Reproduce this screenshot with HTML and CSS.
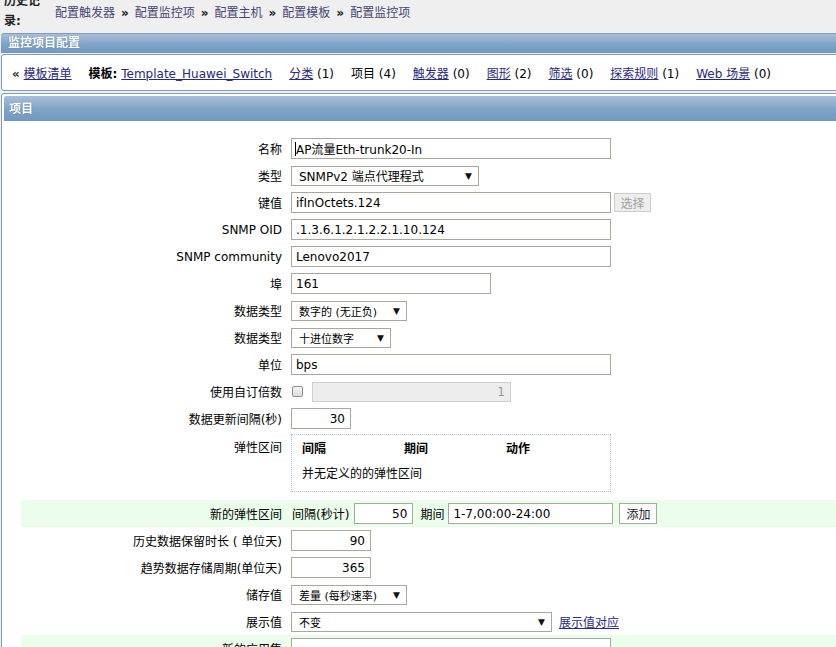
FILE: index.html
```html
<!DOCTYPE html>
<html lang="zh">
<head>
<meta charset="utf-8">
<title>监控项目配置</title>
<link rel="stylesheet" href="styles.css">
</head>
<body>
<div class="page">
  <div class="crumbs">
    <div class="crumb-title">历史记录:</div>
    <div class="crumb-links">
      <a>配置触发器</a><span class="sep">»</span><a>配置监控项</a><span class="sep">»</span><a>配置主机</a><span class="sep">»</span><a>配置模板</a><span class="sep">»</span><a>配置监控项</a>
    </div>
  </div>

  <div class="bar">监控项目配置</div>

  <div class="navbox">
    <span class="nav-item"><span class="laquo">«</span> <a>模板清单</a></span>
    <span class="nav-item"><b>模板:</b> <a>Template_Huawei_Switch</a></span>
    <span class="nav-item"><a>分类</a> (1)</span>
    <span class="nav-item">项目 (4)</span>
    <span class="nav-item"><a>触发器</a> (0)</span>
    <span class="nav-item"><a>图形</a> (2)</span>
    <span class="nav-item"><a>筛选</a> (0)</span>
    <span class="nav-item"><a>探索规则</a> (1)</span>
    <span class="nav-item"><a>Web 场景</a> (0)</span>
  </div>

  <div class="panel">
    <div class="panel-head">项目</div>
    <div class="form">
      <div class="row"><div class="label">名称</div><div class="field"><span class="inp w320"><span class="caret"></span>AP流量Eth-trunk20-In</span></div></div>
      <div class="row"><div class="label">类型</div><div class="field"><span class="sel w188">SNMPv2 端点代理程式<span class="arrow">▼</span></span></div></div>
      <div class="row"><div class="label">键值</div><div class="field"><span class="inp w320">ifInOctets.124</span><span class="btn disabled">选择</span></div></div>
      <div class="row"><div class="label">SNMP OID</div><div class="field"><span class="inp w320">.1.3.6.1.2.1.2.2.1.10.124</span></div></div>
      <div class="row"><div class="label">SNMP community</div><div class="field"><span class="inp w320">Lenovo2017</span></div></div>
      <div class="row"><div class="label">埠</div><div class="field"><span class="inp w200">161</span></div></div>
      <div class="row"><div class="label">数据类型</div><div class="field"><span class="sel w116 small">数字的 (无正负)<span class="arrow">▼</span></span></div></div>
      <div class="row"><div class="label">数据类型</div><div class="field"><span class="sel w100 small">十进位数字<span class="arrow">▼</span></span></div></div>
      <div class="row"><div class="label">单位</div><div class="field"><span class="inp w320">bps</span></div></div>
      <div class="row"><div class="label">使用自订倍数</div><div class="field"><span class="check"></span><span class="inp w199 num off">1</span></div></div>
      <div class="row"><div class="label">数据更新间隔(秒)</div><div class="field"><span class="inp w60 num">30</span></div></div>
      <div class="row tall"><div class="label">弹性区间</div><div class="field">
        <div class="flexbox">
          <div class="flex-head"><span>间隔</span><span>期间</span><span>动作</span></div>
          <div class="flex-empty">并无定义的的弹性区间</div>
        </div>
      </div></div>
      <div class="row green"><div class="label">新的弹性区间</div><div class="field">
        <span class="txt">间隔(秒计)</span><span class="inp w59 num">50</span><span class="txt gap">期间</span><span class="inp w165">1-7,00:00-24:00</span><span class="btn add">添加</span>
      </div></div>
      <div class="row"><div class="label">历史数据保留时长 ( 单位天)</div><div class="field"><span class="inp w80 num">90</span></div></div>
      <div class="row"><div class="label">趋势数据存储周期(单位天)</div><div class="field"><span class="inp w80 num">365</span></div></div>
      <div class="row"><div class="label">储存值</div><div class="field"><span class="sel w116 small">差量 (每秒速率)<span class="arrow">▼</span></span></div></div>
      <div class="row"><div class="label">展示值</div><div class="field"><span class="sel w261 small">不变<span class="arrow">▼</span></span><a class="maplink">展示值对应</a></div></div>
      <div class="row green"><div class="label">新的应用集</div><div class="field"><span class="inp w320"></span></div></div>
    </div>
  </div>
</div>
</body>
</html>
```

FILE: styles.css
```css
html, body {
  margin: 0;
  padding: 0;
  background: #efefef;
  overflow: hidden;
}
body {
  font-family: "DejaVu Sans", "Noto Sans CJK SC", sans-serif;
  font-size: 12px;
  color: #000;
}
.page {
  width: 880px;
}
a {
  color: #28287c;
  text-decoration: underline;
  cursor: pointer;
}

/* breadcrumbs */
.crumbs {
  display: flex;
  align-items: center;
  margin-top: -9px;
  height: 40px;
  padding-left: 4px;
}
.crumb-title {
  width: 40px;
  font-weight: bold;
  line-height: 20px;
  color: #222;
}
.crumb-links {
  padding-left: 11px;
  padding-top: 1px;
  color: #333;
}
.crumb-links a {
  color: #454577;
  text-decoration: none;
}
.crumb-links .sep {
  font-weight: bold;
  margin: 0 6px;
  color: #111;
}

/* header bars */
.bar {
  margin: 2px 0 0 1px;
  height: 20px;
  line-height: 19px;
  box-sizing: border-box;
  padding-left: 7px;
  color: #fff;
  font-weight: bold;
  background: linear-gradient(#a8bfda, #7ea3c7 55%, #7199be);
  border-top: 1px solid #7e9cbf;
  border-radius: 3px 0 0 0;
  text-shadow: 0 0 1px #4a6a90;
}
.navbox {
  margin: 1px 0 0 1px;
  height: 37px;
  box-sizing: border-box;
  background: #fff;
  border: 1px solid #7e9cbf;
  border-radius: 3px;
  display: flex;
  align-items: center;
  padding-left: 10px;
  padding-bottom: 1px;
}
.nav-item {
  margin-right: 17px;
  white-space: nowrap;
}
.laquo {
  font-weight: bold;
  color: #333;
}

/* panel */
.panel {
  margin: 2px 0 0 1px;
  background: #fff;
  border: 1px solid #7e9cbf;
  border-radius: 3px;
  padding: 2px 0 0 2px;
  min-height: 600px;
}
.panel-head {
  height: 25px;
  box-sizing: border-box;
  padding: 3px 0 0 5px;
  color: #fff;
  font-weight: bold;
  background: linear-gradient(#a8bfda, #7ea3c7 55%, #7199be);
  border-radius: 2px 0 0 0;
  text-shadow: 0 0 1px #4a6a90;
}
.form {
  padding: 14px 0 0 17px;
}
.row {
  display: flex;
  align-items: center;
  height: 27px;
}
.row.green {
  background: #ebfdeb;
}
.row.tall {
  height: 68px;
  align-items: flex-start;
}
.label {
  width: 261px;
  padding-right: 9px;
  text-align: right;
  white-space: nowrap;
}
.row.tall .label {
  padding-top: 6px;
}
.field {
  display: flex;
  align-items: center;
}
.row.tall .field {
  padding-top: 2px;
}

/* controls */
.inp {
  display: inline-flex;
  align-items: center;
  box-sizing: border-box;
  height: 21px;
  border: 1px solid #aaa89b;
  background: #fff;
  padding: 0 4px;
  font-size: 12px;
  white-space: nowrap;
  position: relative;
}
.inp.num {
  justify-content: flex-end;
  padding-right: 5px;
}
.inp.off {
  background: #ededed;
  border-color: #cfcfcf;
  color: #999;
  height: 20px;
  margin-left: 9px;
}
.caret {
  display: inline-block;
  width: 1px;
  height: 14px;
  background: #000;
  margin-left: -1px;
}
.sel {
  display: inline-flex;
  align-items: center;
  justify-content: space-between;
  box-sizing: border-box;
  height: 20px;
  border: 1px solid #aaa89b;
  background: #fff;
  padding: 0 6px 0 7px;
  font-size: 12px;
  white-space: nowrap;
}
.sel.small {
  font-size: 11px;
}
.arrow {
  font-size: 9px;
  color: #111;
}
.w320 { width: 320px; }
.w200 { width: 200px; }
.w188 { width: 188px; }
.w199 { width: 199px; }
.w116 { width: 116px; }
.w100 { width: 100px; }
.w261 { width: 261px; }
.w60 { width: 60px; }
.w59 { width: 59px; }
.w80 { width: 80px; }
.w165 { width: 165px; }

.btn {
  display: inline-flex;
  align-items: center;
  justify-content: center;
  box-sizing: border-box;
  height: 19px;
  padding: 0 5px;
  margin-left: 3px;
  border: 1px solid #aaa89b;
  background: #fff;
  color: #222;
}
.btn.disabled {
  background: #eeeeee;
  border-color: #cccccc;
  color: #a0a0a0;
  width: 37px;
}
.btn.add {
  margin-left: 6px;
  height: 21px;
  width: 38px;
}
.check {
  display: inline-block;
  box-sizing: border-box;
  width: 11px;
  height: 11px;
  border: 1px solid #8f8f8f;
  border-radius: 2px;
  background: linear-gradient(#f4f4f4, #dedede);
  margin-left: 1px;
}
.txt {
  margin: 0 5px 0 1px;
}
.txt.gap {
  margin-left: 7px;
  margin-right: 4px;
}
.maplink {
  margin-left: 7px;
  color: #2b2b86;
}
.flexbox {
  box-sizing: border-box;
  width: 320px;
  height: 58px;
  border: 1px dotted #b4bed6;
  padding: 4px 0 0 10px;
}
.flex-head {
  display: flex;
  font-weight: bold;
}
.flex-head span {
  width: 102px;
}
.flex-empty {
  margin-top: 8px;
}
```
